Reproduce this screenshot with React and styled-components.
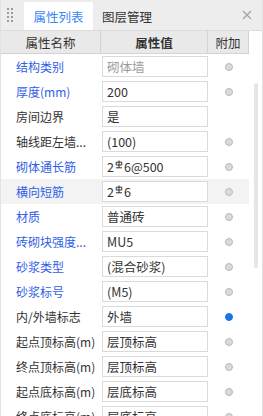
import React from "react"
import styled, { createGlobalStyle } from "styled-components"

const GlobalStyle = createGlobalStyle`
  html, body {
    margin: 0;
    padding: 0;
    background: #ffffff;
  }
  body {
    font-family: "Noto Sans CJK SC", "Noto Sans", "Liberation Sans", sans-serif;
  }
`

const Panel = styled.div`
  width: 263px;
  height: 416px;
  box-sizing: border-box;
  border-left: 1px solid #e2e2e2;
  border-right: 1px solid #e2e2e2;
  display: flex;
  flex-direction: column;
  overflow: hidden;
  position: relative;
  background: #fff;
`

const TabBar = styled.div`
  height: 30px;
  background: #ededee;
  display: flex;
  align-items: flex-end;
  flex-shrink: 0;
`

const Handle = styled.div`
  width: 23px;
  height: 30px;
  display: grid;
  grid-template-columns: 2px 2px;
  grid-auto-rows: 2px;
  column-gap: 2px;
  row-gap: 2px;
  align-content: start;
  padding: 8px 0 0 6px;
  box-sizing: border-box;
`

const Dot = styled.span`
  background: #9c9c9c;
`

const Tab = styled.div`
  height: 28px;
  width: ${p => p.$w}px;
  display: flex;
  align-items: center;
  justify-content: center;
  font-size: 12.5px;
  color: ${p => (p.$active ? "#3a86f5" : "#333")};
  background: ${p => (p.$active ? "#fff" : "transparent")};
`

const Close = styled.div`
  margin-left: auto;
  width: 30px;
  height: 30px;
  display: flex;
  align-items: center;
  justify-content: center;
  color: #a0a0a0;
  align-self: center;
`

const HeaderRow = styled.div`
  display: grid;
  grid-template-columns: 100px 107px 41px 1fr;
  height: 24px;
  flex-shrink: 0;
  border-top: 1px solid #dcdcdc;
  box-sizing: border-box;
`

const HeadCell = styled.div`
  background: #e9e9e9;
  border-right: 1px solid #d3d3d3;
  border-bottom: 1px solid #d3d3d3;
  display: flex;
  align-items: center;
  justify-content: center;
  font-size: 12.5px;
  color: #333;
  font-weight: ${p => (p.$bold ? 700 : 400)};
`

const Spacer = styled.div`
  background: #fff;
`

const Body = styled.div`
  flex: 1;
  overflow: hidden;
`

const Row = styled.div`
  display: grid;
  grid-template-columns: 101px 106px 41px;
  height: 25px;
  align-items: center;
  background: ${p => (p.$hl ? "#f3f3f3" : "transparent")};
  width: 248px;
`

const Label = styled.div`
  padding-left: 15px;
  font-size: 12px;
  color: ${p => (p.$blue ? "#2f5ee8" : "#333")};
  white-space: nowrap;
  overflow: hidden;
`

const ValueBox = styled.div`
  height: 21px;
  box-sizing: border-box;
  border: 1px solid #dadada;
  background: #fff;
  display: flex;
  align-items: center;
  padding-left: 4px;
  font-size: 12.5px;
  color: ${p => (p.$muted ? "#9a9a9a" : "#333")};
  white-space: nowrap;
`

const Radio = styled.span`
  justify-self: center;
  margin-left: 1px;
  width: 8px;
  height: 8px;
  border-radius: 50%;
  box-sizing: border-box;
  background: ${p => (p.$on ? "#1a73e8" : "#dadada")};
  border: 1px solid ${p => (p.$on ? "#1a73e8" : "#b9b9b9")};
`

const ScrollThumb = styled.div`
  position: absolute;
  left: 253px;
  top: 83px;
  width: 4px;
  height: 185px;
  border-radius: 2px;
  background: #e6e6e6;
`

const SteelMark = styled.svg`
  margin: 0 1px 5px;
  flex-shrink: 0;
`

const Steel = () => (
  <SteelMark width="8" height="9" viewBox="0 0 8 9">
    <path
      d="M4 0.5 V8 M1 7.8 H7 M1.2 2.2 H6.8 V5 H1.2 Z"
      stroke="#333"
      strokeWidth="1"
      fill="none"
    />
  </SteelMark>
)

const rows = [
  { name: "结构类别", value: "砌体墙", blue: true, muted: true, radio: true },
  { name: "厚度(mm)", value: "200", blue: true, radio: true },
  { name: "房间边界", value: "是" },
  { name: "轴线距左墙...", value: "(100)", radio: true },
  { name: "砌体通长筋", value: ["2", "6@500"], blue: true, radio: true },
  { name: "横向短筋", value: ["2", "6"], blue: true, radio: true, hl: true },
  { name: "材质", value: "普通砖", blue: true, radio: true },
  { name: "砖砌块强度...", value: "MU5", blue: true, radio: true },
  { name: "砂浆类型", value: "(混合砂浆)", blue: true, radio: true },
  { name: "砂浆标号", value: "(M5)", blue: true, radio: true },
  { name: "内/外墙标志", value: "外墙", radio: true, on: true },
  { name: "起点顶标高(m)", value: "层顶标高", radio: true },
  { name: "终点顶标高(m)", value: "层顶标高", radio: true },
  { name: "起点底标高(m)", value: "层底标高", radio: true },
  { name: "终点底标高(m)", value: "层底标高", radio: true },
]

const App = () => {
  return (
    <Panel>
      <GlobalStyle />
      <TabBar>
        <Handle>
          {Array.from({ length: 8 }).map((_, i) => <Dot key={i} />)}
        </Handle>
        <Tab $active $w={69}>属性列表</Tab>
        <Tab $w={68}>图层管理</Tab>
        <Close>
          <svg width="10" height="10" viewBox="0 0 10 10">
            <path d="M1 1 L9 9 M9 1 L1 9" stroke="#a3a3a3" strokeWidth="1.3" />
          </svg>
        </Close>
      </TabBar>
      <HeaderRow>
        <HeadCell>属性名称</HeadCell>
        <HeadCell $bold>属性值</HeadCell>
        <HeadCell>附加</HeadCell>
        <Spacer />
      </HeaderRow>
      <Body>
        {rows.map(r => (
          <Row key={r.name} $hl={r.hl}>
            <Label $blue={r.blue}>{r.name}</Label>
            <ValueBox $muted={r.muted}>
              {Array.isArray(r.value) ? (
                <>
                  {r.value[0]}
                  <Steel />
                  {r.value[1]}
                </>
              ) : (
                r.value
              )}
            </ValueBox>
            {r.radio ? <Radio $on={r.on} /> : <span />}
          </Row>
        ))}
      </Body>
      <ScrollThumb />
    </Panel>
  )
}

export default App
